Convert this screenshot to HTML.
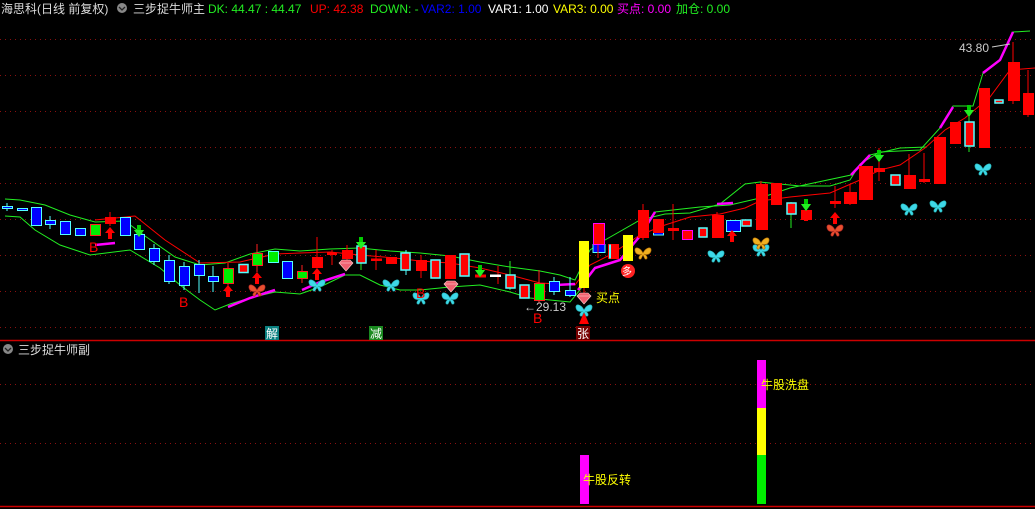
<!DOCTYPE html>
<html><head><meta charset="utf-8"><style>
html,body{margin:0;padding:0;background:#000;width:1035px;height:509px;overflow:hidden}
svg{display:block}
text{font-family:"Liberation Sans","Noto Sans CJK SC",sans-serif;font-size:12px}
</style></head><body>
<svg width="1035" height="509" viewBox="0 0 1035 509" xmlns="http://www.w3.org/2000/svg">
<defs>
<g id="bf"><path d="M0 0 C-3-6-9-7-8-2 C-7 2-3 2-1 1 C-5 3-5 7-2 6 L0 2 L2 6 C5 7 5 3 1 1 C3 2 7 2 8-2 C9-7 3-6 0 0Z" fill="#3ed8e8" stroke="#2aa" stroke-width="0.6"/></g>
<g id="bo"><path d="M0 0 C-3-6-9-7-8-2 C-7 2-3 2-1 1 C-5 3-5 7-2 6 L0 2 L2 6 C5 7 5 3 1 1 C3 2 7 2 8-2 C9-7 3-6 0 0Z" fill="#e85030" stroke="#a22" stroke-width="0.6"/></g>
<g id="by"><path d="M0 0 C-3-6-9-7-8-2 C-7 2-3 2-1 1 C-5 3-5 7-2 6 L0 2 L2 6 C5 7 5 3 1 1 C3 2 7 2 8-2 C9-7 3-6 0 0Z" fill="#f0b020" stroke="#a60" stroke-width="0.6"/></g>
<g id="ua"><path d="M0 0 L-5 6 L-2 6 L-2 12 L2 12 L2 6 L5 6Z" fill="#f00"/></g>
<g id="da"><path d="M0 12 L-5 5 L-2 5 L-2 0 L2 0 L2 5 L5 5Z" fill="#0c0"/><path d="M0 12 L-5 5 L5 5Z" fill="#2e2"/></g>
<g id="gem"><path d="M-7-3 L-4-6 L4-6 L7-3 L0 5Z" fill="#f06070" stroke="#fcc" stroke-width="0.6"/><path d="M-7-3 L7-3" stroke="#fcc" stroke-width="0.6"/></g>
</defs>
<g stroke="#8a1010" stroke-dasharray="1 4" stroke-width="1">
<line x1="0" y1="39.5" x2="1035" y2="39.5"/><line x1="0" y1="75.5" x2="1035" y2="75.5"/>
<line x1="0" y1="111.5" x2="1035" y2="111.5"/><line x1="0" y1="147.5" x2="1035" y2="147.5"/>
<line x1="0" y1="183.5" x2="1035" y2="183.5"/><line x1="0" y1="219.5" x2="1035" y2="219.5"/>
<line x1="0" y1="255.5" x2="1035" y2="255.5"/><line x1="0" y1="291.5" x2="1035" y2="291.5"/>
<line x1="0" y1="327.5" x2="1035" y2="327.5"/>
<line x1="0" y1="384.5" x2="1035" y2="384.5"/><line x1="0" y1="443.5" x2="1035" y2="443.5"/>
</g>
<line x1="0" y1="340.5" x2="1035" y2="340.5" stroke="#c00" stroke-width="1.5"/>
<line x1="0" y1="506.5" x2="1035" y2="506.5" stroke="#c00" stroke-width="1.5"/>

<polyline fill="none" stroke="#2e2" stroke-width="1" points="5,199 20,200 45,205 70,215 95,222 125,221 145,236 175,257 200,265 225,263 250,254 275,249 300,251 330,249 360,248 390,251 420,253 450,256 480,262 510,267 540,271 560,275 575,280 590,250 605,240 640,220 665,214 690,213 720,204 745,184 760,182 800,186 830,186 850,180 860,164 880,152 920,150 940,128 953,106 973,106 983,73 1000,60 1013,32 1030,31"/>
<polyline fill="none" stroke="#2e2" stroke-width="1" points="5,216 20,217 35,230 60,245 90,255 130,250 160,268 180,285 200,300 215,310 230,304 250,298 275,292 300,294 320,287 345,275 360,275 380,285 400,290 420,290 450,287 480,285 510,292 530,298 550,300 570,302 580,290 595,268 620,260 640,236 655,212 700,207 730,205 760,198 790,188 851,175 870,155 900,148 927,147"/>
<polyline fill="none" stroke="#f00" stroke-width="1" points="95,220 135,216 165,240 200,263 240,262 275,254 300,253 330,252 360,255 395,258 420,261 450,263 480,268 510,275 540,283 575,285 590,265 610,255 640,235 665,225 690,217 720,214 745,208 760,201 790,197 830,193 860,180 880,170 900,165 925,148 945,130 965,118 990,97 1010,70 1035,68"/>
<g fill="none" stroke="#f0f" stroke-width="2.5">
<polyline points="95,245 115,243"/><polyline points="228,307 250,298 275,290"/><polyline points="302,290 320,282 345,274"/>
<polyline points="578,290 595,268 620,260 640,236 655,212"/><polyline points="717,204 733,203"/>
<polyline points="851,175 870,155"/><polyline points="940,128 953,107"/><polyline points="983,73 1000,60 1013,32"/>
<polyline points="556,285 575,284"/>
</g>

<g stroke-width="1">
<g fill="#0000ff" stroke="#55ffff">
<line x1="7" y1="203" x2="7" y2="211"/><rect x="2.5" y="206.5" width="10" height="2"/>
<rect x="17.5" y="208.5" width="10" height="2"/>
<rect x="31.5" y="207.5" width="10" height="18"/>
<line x1="50" y1="216" x2="50" y2="229"/><rect x="45.5" y="220.5" width="10" height="4"/>
<rect x="60.5" y="221.5" width="10" height="13"/>
<rect x="75.5" y="228.5" width="10" height="7"/>
<rect x="120.5" y="217.5" width="10" height="18"/>
<rect x="134.5" y="234.5" width="10" height="15"/>
<line x1="154" y1="244" x2="154" y2="265"/><rect x="149.5" y="248.5" width="10" height="13"/>
<line x1="169" y1="255" x2="169" y2="284"/><rect x="164.5" y="260.5" width="10" height="21"/>
<line x1="184" y1="262" x2="184" y2="290"/><rect x="179.5" y="266.5" width="10" height="19"/>
<line x1="199" y1="260" x2="199" y2="293"/><rect x="194.5" y="264.5" width="10" height="11"/>
<line x1="213" y1="266" x2="213" y2="292"/><rect x="208.5" y="276.5" width="10" height="5"/>
<rect x="282.5" y="261.5" width="10" height="17"/>
<line x1="554" y1="277" x2="554" y2="295"/><rect x="549.5" y="281.5" width="10" height="10"/>
<line x1="570" y1="277" x2="570" y2="297"/><rect x="565.5" y="290.5" width="10" height="5"/>
<rect x="593" y="244.5" width="12" height="8"/>
<rect x="653.5" y="231" width="10" height="4"/>
<rect x="726.5" y="220.5" width="14" height="11"/>
</g>
<g fill="#ff0000" stroke="#ff0000">
<line x1="110" y1="212" x2="110" y2="226"/><rect x="105.5" y="217.5" width="10" height="6"/>
<line x1="317" y1="237" x2="317" y2="268"/><rect x="312.5" y="257.5" width="10" height="10"/>
<line x1="332" y1="250" x2="332" y2="265"/><rect x="327.5" y="253" width="9" height="1.5"/>
<line x1="347" y1="245" x2="347" y2="260"/><rect x="342.5" y="250.5" width="10" height="8"/>
<line x1="376" y1="250" x2="376" y2="270"/><rect x="371.5" y="259" width="10" height="1.5"/>
<rect x="386.5" y="257.5" width="10" height="6"/>
<line x1="421" y1="255" x2="421" y2="278"/><rect x="416.5" y="260.5" width="10" height="10"/>
<rect x="445.5" y="255.5" width="10" height="23"/>
<rect x="475.5" y="275" width="10" height="2"/>
<line x1="498" y1="266" x2="498" y2="284"/><rect x="490.5" y="275" width="10" height="1.5" fill="#fff" stroke="#fff"/>
<line x1="598" y1="223" x2="598" y2="258"/><rect x="593.5" y="223.5" width="11" height="21" stroke="#f0f"/>
<rect x="608.5" y="244.5" width="10" height="14"/>
<line x1="643" y1="204" x2="643" y2="240"/><rect x="638.5" y="210.5" width="10" height="27"/>
<rect x="653.5" y="219.5" width="10" height="13"/>
<line x1="673" y1="204" x2="673" y2="240"/><rect x="668.5" y="228.5" width="10" height="2"/>
<rect x="682.5" y="230.5" width="10" height="9" stroke="#f0f"/>
<line x1="717" y1="212" x2="717" y2="238"/><rect x="712.5" y="215.5" width="11" height="22"/>
<line x1="761" y1="181" x2="761" y2="230"/><rect x="756.5" y="184.5" width="11" height="45"/>
<rect x="771.5" y="183.5" width="10" height="21"/>
<rect x="801.5" y="210.5" width="10" height="9"/>
<line x1="835" y1="186" x2="835" y2="208"/><rect x="830.5" y="201.5" width="10" height="2"/>
<line x1="850" y1="184" x2="850" y2="205"/><rect x="844.5" y="192.5" width="12" height="11"/>
<rect x="859.5" y="166.5" width="13" height="33"/>
<line x1="879" y1="148" x2="879" y2="181"/><rect x="874.5" y="168.5" width="10" height="3"/>
<line x1="909" y1="154" x2="909" y2="188"/><rect x="904.5" y="175.5" width="11" height="13"/>
<line x1="924" y1="153" x2="924" y2="183"/><rect x="919.5" y="179.5" width="10" height="2"/>
<rect x="934.5" y="137.5" width="11" height="46"/>
<rect x="950.5" y="122.5" width="10" height="21"/>
<rect x="979.5" y="88.5" width="10" height="59"/>
<line x1="1013" y1="42" x2="1013" y2="104"/><rect x="1008.5" y="62.5" width="11" height="38"/>
<line x1="1028" y1="70" x2="1028" y2="117"/><rect x="1023.5" y="93.5" width="10" height="21"/>
</g>
<g fill="#ff0000" stroke="#55ffff" stroke-width="1.5">
<rect x="239" y="264.5" width="9" height="8"/>
<line x1="406" y1="250" x2="406" y2="275" stroke-width="1"/><rect x="401" y="253" width="9" height="17"/>
<rect x="431" y="260" width="9" height="18"/>
<rect x="460" y="254" width="9" height="22"/>
<line x1="510" y1="261" x2="510" y2="290" stroke-width="1" stroke="#2e2"/><rect x="506" y="275" width="9" height="13"/>
<rect x="520" y="285" width="9" height="13"/>
<line x1="361" y1="240" x2="361" y2="270" stroke-width="1" stroke="#2e2"/><rect x="357" y="246" width="9" height="17"/>
<rect x="609" y="244.5" width="2" height="14" stroke="none" fill="#5ff"/>
<rect x="699" y="228" width="8" height="9"/>
<rect x="742" y="220" width="9" height="6"/>
<line x1="791" y1="202" x2="791" y2="228" stroke-width="1" stroke="#2e2"/><rect x="787" y="203" width="9" height="11"/>
<rect x="891" y="175" width="9" height="10"/>
<line x1="969" y1="109" x2="969" y2="152" stroke-width="1" stroke="#2e2"/><rect x="965" y="122" width="9" height="24"/>
<rect x="995" y="100" width="8" height="3"/>
</g>
<g fill="#00ee00" stroke="#ff2020">
<rect x="90.5" y="224.5" width="10" height="11"/>
<line x1="228" y1="263" x2="228" y2="290"/><rect x="223.5" y="268.5" width="10" height="15"/>
<line x1="257" y1="244" x2="257" y2="272"/><rect x="252.5" y="253.5" width="10" height="12"/>
<rect x="268.5" y="251.5" width="10" height="11" stroke="#5ff"/>
<line x1="302" y1="265" x2="302" y2="283"/><rect x="297.5" y="271.5" width="10" height="7"/>
<line x1="539" y1="270" x2="539" y2="303"/><rect x="534.5" y="283.5" width="10" height="17"/>
</g>
<rect x="579" y="241" width="10" height="47" fill="#ffff00"/>
<rect x="623" y="235" width="10" height="26" fill="#ffff00"/>
<line x1="584" y1="288" x2="584" y2="296" stroke="#f00"/>
</g>

<use href="#ua" x="110" y="227"/><use href="#ua" x="228" y="285"/><use href="#ua" x="257" y="272"/><use href="#ua" x="317" y="268"/>
<use href="#ua" x="732" y="230"/><use href="#ua" x="806" y="209"/><use href="#ua" x="835" y="212"/>
<use href="#da" x="139" y="225"/><use href="#da" x="361" y="237"/><use href="#da" x="480" y="265"/><use href="#da" x="806" y="199"/>
<use href="#da" x="879" y="150"/><use href="#da" x="969" y="105"/>
<path d="M579 324 L584 312 L589 324Z" fill="#f00"/>
<use href="#bf" x="317" y="285"/><use href="#bf" x="391" y="285"/><use href="#bf" x="421" y="298"/><use href="#bf" x="450" y="298"/>
<use href="#bf" x="584" y="310"/><use href="#bf" x="716" y="256"/><use href="#bf" x="761" y="250"/><use href="#bf" x="909" y="209"/>
<use href="#bf" x="938" y="206"/><use href="#bf" x="983" y="169"/>
<use href="#bo" x="257" y="290"/><use href="#bo" x="835" y="230"/><use href="#by" x="643" y="253"/><use href="#by" x="761" y="243"/>
<use href="#gem" x="346" y="266"/><use href="#gem" x="451" y="287"/><use href="#gem" x="584" y="299"/>
<g fill="#f00">
<text x="89" y="252" style="font-size:14px">B</text><text x="179" y="307" style="font-size:14px">B</text>
<text x="416" y="298" style="font-size:14px">B</text><text x="533" y="323" style="font-size:14px">B</text>
</g>
<circle cx="628" cy="271" r="7" fill="#f22"/><text x="622" y="275" fill="#fff" style="font-size:10px">多</text>
<text x="596" y="302" fill="#ff0">买点</text>
<text x="524" y="311" fill="#ccc">←29.13</text>
<text x="959" y="52" fill="#ccc">43.80</text>
<path d="M992 47 L1010 44" stroke="#ccc"/>
<rect x="265" y="326" width="14" height="14" fill="#0a8080"/><text x="266" y="338" fill="#fff">解</text>
<rect x="369" y="326" width="14" height="14" fill="#1a8a20"/><text x="370" y="338" fill="#fff">减</text>
<rect x="576" y="326" width="14" height="14" fill="#700"/><text x="577" y="338" fill="#fff">张</text>

<rect x="580" y="455" width="9" height="49" fill="#f0f"/>
<rect x="757" y="360" width="9" height="48" fill="#f0f"/>
<rect x="757" y="408" width="9" height="47" fill="#ff0"/>
<rect x="757" y="455" width="9" height="49" fill="#0e0"/>
<text x="583" y="484" fill="#ff0">牛股反转</text>
<text x="761" y="389" fill="#ff0">牛股洗盘</text>

<text x="1" y="13" fill="#ddd">海思科(日线 前复权)</text>
<circle cx="122" cy="8" r="5" fill="#888"/><path d="M119 7 L122 10 L125 7" stroke="#222" fill="none" stroke-width="1.3"/>
<text x="133" y="13" fill="#ddd">三步捉牛师主</text>
<text x="208" y="13" fill="#2e2">DK: 44.47 : 44.47</text>
<text x="310" y="13" fill="#f00">UP: 42.38</text>
<text x="370" y="13" fill="#2e2">DOWN: -</text>
<text x="421" y="13" fill="#00f">VAR2: 1.00</text>
<text x="488" y="13" fill="#fff">VAR1: 1.00</text>
<text x="553" y="13" fill="#ff0">VAR3: 0.00</text>
<text x="617" y="13" fill="#f0f">买点: 0.00</text>
<text x="676" y="13" fill="#2e2">加仓: 0.00</text>
<circle cx="8" cy="349" r="5" fill="#888"/><path d="M5 348 L8 351 L11 348" stroke="#222" fill="none" stroke-width="1.3"/>
<text x="18" y="354" fill="#ddd">三步捉牛师副</text>
</svg>
</body></html>
